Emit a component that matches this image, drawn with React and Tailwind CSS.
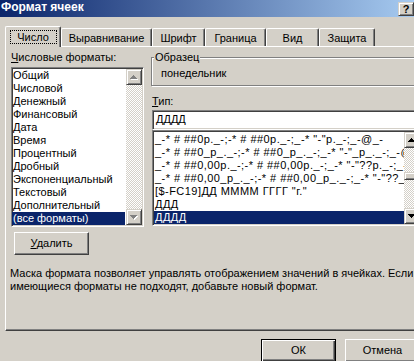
import React from 'react';

// classic 3D borders
const raised = "border border-t-white border-l-white border-r-[#404040] border-b-[#404040] shadow-[inset_-1px_-1px_#808080]";
const arrowBtn = "bg-[#d4d0c8] border border-t-[#d4d0c8] border-l-[#d4d0c8] border-r-[#404040] border-b-[#404040] shadow-[inset_1px_1px_#ffffff,inset_-1px_-1px_#808080]";
const sunken = "border border-t-[#808080] border-l-[#808080] border-r-white border-b-white shadow-[inset_1px_1px_#404040,inset_-1px_-1px_#d4d0c8]";
const dither = "bg-[repeating-conic-gradient(#ffffff_0_25%,#d4d0c8_0_50%)] bg-[length:2px_2px]";

const Arrow = ({ dir = 'up', disabled }) => {
  const rows = [[3, 1], [2, 3], [1, 5], [0, 7]];
  const r = dir === 'up' ? rows : [...rows].reverse();
  return (
    <svg width="8" height="5" viewBox="0 0 8 5" shapeRendering="crispEdges">
      {disabled && r.map(([x, w], i) => <rect key={'s' + i} x={x + 1} y={i + 1} width={w} height="1" fill="#ffffff" />)}
      {r.map(([x, w], i) => <rect key={i} x={x} y={i} width={w} height="1" fill={disabled ? '#808080' : '#000000'} />)}
    </svg>
  );
};

const ArrowButton = ({ dir, disabled }) => (
  <div className={`w-[16px] h-[16px] shrink-0 flex items-center justify-center ${arrowBtn}`}>
    <Arrow dir={dir} disabled={disabled} />
  </div>
);

const categories = [
  'Общий', 'Числовой', 'Денежный', 'Финансовый', 'Дата', 'Время',
  'Процентный', 'Дробный', 'Экспоненциальный', 'Текстовый', 'Дополнительный', '(все форматы)'
];

const formats = [
  '_-* # ##0р._-;-* # ##0р._-;_-* "-"р._-;_-@_-',
  '_-* # ##0_р_._-;-* # ##0_р_._-;_-* "-"_р_._-;_-@_-',
  '_-* # ##0,00р._-;-* # ##0,00р._-;_-* "-"??р._-;_-@_-',
  '_-* # ##0,00_р_._-;-* # ##0,00_р_._-;_-* "-"??_р_._-;_-@_-',
  '[$-FC19]ДД ММММ ГГГГ "г."',
  'ДДД',
  'ДДДД'
];

const tabs = [
  { label: 'Выравнивание', w: 'w-[91px]' },
  { label: 'Шрифт', w: 'w-[53px]' },
  { label: 'Граница', w: 'w-[61px]' },
  { label: 'Вид', w: 'w-[53px]' },
  { label: 'Защита', w: 'w-[56px]' }
];

const tabBase = "border-l border-t border-r border-l-white border-t-white border-r-[#404040] rounded-t-[2px] shadow-[inset_-1px_0_#808080] bg-[#d4d0c8] flex justify-center";

const App = () => {
  return (
    <div className="w-[414px] h-[361px] overflow-hidden bg-[#d4d0c8] text-[11px] leading-[13px] text-black font-['Liberation_Sans',sans-serif]">
      <div className="w-[440px]">
        {/* заголовок */}
        <div className="h-[17px] flex items-start bg-[linear-gradient(to_right,#0a246a_0%,#a6caf0_94%,#a6caf0_100%)]">
          <div className="mt-[1px] ml-[1px] font-bold text-white text-[12px] leading-[13px]">Формат ячеек</div>
          <div className={`ml-auto mr-[26px] mt-[2px] w-[16px] h-[14px] bg-[#d4d0c8] flex items-center justify-center font-bold text-[11px] leading-[11px] ${arrowBtn}`}>?</div>
        </div>

        {/* вкладки */}
        <div className="mt-[9px] h-[20px] pl-[5px] flex items-end">
          <div className={`${tabBase} relative z-10 w-[56px] h-[21px] -mb-px pt-[3px]`}>
            <span className="h-[14px] w-[47px] border border-dotted border-black text-center leading-[13px]">Число</span>
          </div>
          {tabs.map(t => (
            <div key={t.label} className={`${tabBase} ${t.w} h-[18px] pt-[3px]`}>{t.label}</div>
          ))}
        </div>

        {/* панель */}
        <div className="ml-[5px] w-[430px] h-[285px] border border-t-white border-l-white border-r-[#404040] border-b-[#404040] shadow-[inset_-1px_-1px_#808080]">
          <div className="flex">
            <div className="ml-[5px] w-[133px] pt-[4px] flex flex-col">
              <div className="h-[13px] whitespace-nowrap"><u>Ч</u>исловые форматы:</div>
              <div className={`mt-[3px] h-[160px] flex bg-white ${sunken}`}>
                <div className="flex-1 overflow-hidden p-px pl-0">
                  {categories.map((c, i) => (
                    <div key={c} className={`h-[13px] pl-px whitespace-nowrap ${i === categories.length - 1 ? 'bg-[#0a246a] text-white' : ''}`}>{c}</div>
                  ))}
                </div>
                <div className="w-[16px] my-px mr-px flex flex-col">
                  <ArrowButton dir="up" disabled />
                  <div className={`flex-1 ${dither}`} />
                  <ArrowButton dir="down" disabled />
                </div>
              </div>
              <button className={`mt-[5px] ml-[3px] w-[75px] h-[23px] bg-[#d4d0c8] text-center leading-[13px] ${raised}`}>
                <u>У</u>далить
              </button>
            </div>

            <div className="ml-[7px] w-[270px] flex flex-col">
              <div className="mt-[10px] h-[29px] relative border border-[#808080] shadow-[inset_1px_1px_#ffffff,1px_1px_#ffffff]">
                <span className="absolute -top-[7px] left-[2px] px-px bg-[#d4d0c8]">Образец</span>
                <div className="pl-[9px] pt-[9px]">понедельник</div>
              </div>
              <div className="ml-px mt-[9px] h-[13px]"><u>Т</u>ип:</div>
              <div className={`ml-px mt-[2px] w-[270px] h-[20px] bg-white pl-[3px] pt-[2px] ${sunken}`}>ДДДД</div>
              <div className={`ml-px w-[270px] h-[96px] flex bg-white ${sunken}`}>
                <div className="flex-1 overflow-hidden pt-[2px] pl-px tracking-[0.45px]">
                  {formats.map((f, i) => (
                    <div key={f} className={`h-[13px] pl-px whitespace-pre ${i === formats.length - 1 ? 'bg-[#0a246a] text-white' : ''}`}>{f}</div>
                  ))}
                </div>
                <div className="w-[16px] my-px mr-px flex flex-col">
                  <ArrowButton dir="up" />
                  <div className={`h-[24px] ${dither}`} />
                  <div className={`h-[8px] ${arrowBtn}`} />
                  <div className={`flex-1 ${dither}`} />
                  <ArrowButton dir="down" />
                </div>
              </div>
            </div>
          </div>

          <p className="mt-[12px] ml-[4px] whitespace-nowrap">
            Маска формата позволяет управлять отображением значений в ячейках. Если<br />
            имеющиеся форматы не подходят, добавьте новый формат.
          </p>
        </div>

        {/* кнопки */}
        <div className="mt-[8px] pl-[261px] flex gap-[9px]">
          <button className="w-[75px] h-[23px] bg-[#d4d0c8] border border-black shadow-[inset_1px_1px_#ffffff,inset_-1px_-1px_#404040,inset_-2px_-2px_#808080] text-center">ОК</button>
          <button className={`w-[75px] h-[23px] bg-[#d4d0c8] text-center ${raised}`}>Отмена</button>
        </div>
      </div>
    </div>
  );
};

export default App;
